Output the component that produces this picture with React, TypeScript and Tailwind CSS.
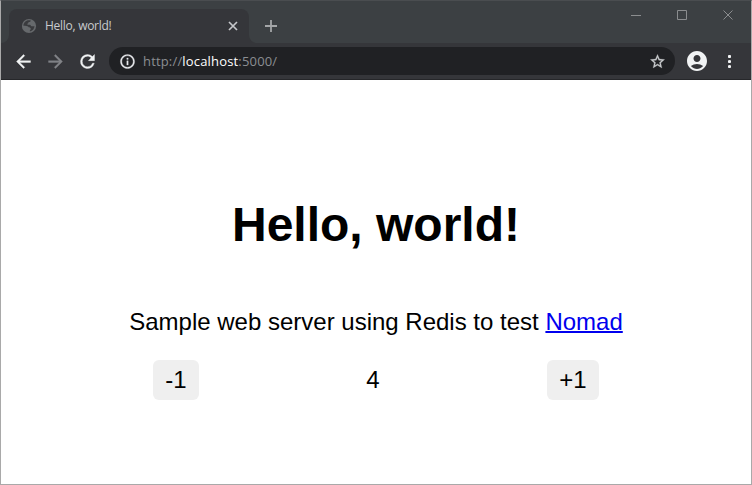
import React from "react";
import { MdAccountCircle } from "react-icons/md";

function GlobeIcon() {
  return (
    <svg className="shrink-0" width="16" height="16" viewBox="0 0 16 16">
      <circle cx="8" cy="8" r="7.1" fill="#66696c" />
      <path
        d="M9.8 2.4c-.2 1.3-.9 1.5-2 1.7-.5.2-.3 1.3-1 1.5-.6.2-.7.7-.2 1.2h2.3c.9 0 .8 1.4 1.700 1.500h2.900c-.2 2.600-2 4.800-4.600 5.200v-1.600c1.100-.3 1.100-1.500.5-2-.8-.6-1.500-.4-2.100-1.200C6.600 7.800 4.500 7.700 2.400 7.700c.1-3.300 2.900-6.500 7.400-5.300z"
        fill="#35363a"
        opacity=".9"
      />
    </svg>
  );
}

type IconProps = { d: string; size: number; className: string };

function Icon({ d, size, className }: IconProps) {
  return (
    <svg
      className={className}
      width={size}
      height={size}
      viewBox="0 0 24 24"
      fill="currentColor"
      stroke="currentColor"
      strokeWidth="0.4"
    >
      <path d={d} />
    </svg>
  );
}

const BACK = "M20 11H7.83l5.59-5.59L12 4l-8 8 8 8 1.410-1.410L7.830 13H20v-2z";
const FORWARD = "M12 4l-1.410 1.410L16.170 11H4v2h12.170l-5.580 5.590L12 20l8-8z";
const RELOAD =
  "M17.650 6.350A7.958 7.958 0 0 0 12 4a8 8 0 1 0 7.730 10h-2.080A5.990 5.990 0 0 1 12 18a6 6 0 1 1 0-12c1.660 0 3.140.690 4.220 1.780L13 11h7V4l-2.350 2.350z";
const INFO =
  "M11 7h2v2h-2zm0 4h2v6h-2zm1-9C6.480 2 2 6.480 2 12s4.480 10 10 10 10-4.480 10-10S17.520 2 12 2zm0 18c-4.410 0-8-3.590-8-8s3.590-8 8-8 8 3.590 8 8-3.590 8-8 8z";
const STAR =
  "M22 9.240l-7.190-.620L12 2 9.190 8.630 2 9.240l5.460 4.730L5.820 21 12 17.270 18.180 21l-1.630-7.030L22 9.240zM12 15.400l-3.760 2.270 1-4.280-3.320-2.880 4.380-.380L12 6.100l1.710 4.040 4.380.380-3.320 2.880 1 4.280L12 15.400z";

function WindowControls() {
  return (
    <div className="ml-auto mr-[17px] mt-[9px] flex h-[11px] gap-[35px] text-[#8b8d8f]">
      <svg width="11" height="11" viewBox="0 0 11 11" fill="none" stroke="currentColor">
        <path d="M0 5.5H10" />
      </svg>
      <svg width="11" height="11" viewBox="0 0 11 11" fill="none" stroke="currentColor">
        <path d="M.5.5h9v9h-9z" />
      </svg>
      <svg width="11" height="11" viewBox="0 0 11 11" fill="none" stroke="currentColor">
        <path d="M.5.5l9 9M9.500.500l-9 9" />
      </svg>
    </div>
  );
}

function TabStrip() {
  return (
    <div className="flex h-[42px] items-start bg-[#3c4043]">
      <svg className="mt-[34px] shrink-0" width="8" height="8" viewBox="0 0 8 8">
        <path d="M8 0v8H0a8 8 0 0 0 8-8z" fill="#35363a" />
      </svg>
      <div className="mt-2 flex h-[34px] w-[240px] items-center rounded-t-lg bg-[#35363a] pl-3 pr-[11px]">
        <GlobeIcon />
        <span className="ml-2 whitespace-nowrap font-['Open_Sans','Noto_Sans',sans-serif] text-[12px] leading-4 tracking-[-0.28px] text-[#c9cbce]">
          Hello, world!
        </span>
        <svg className="ml-auto" width="10" height="10" viewBox="0 0 10 10" fill="none" stroke="#c5c7ca" strokeWidth="1.7">
          <path d="M1 1l8 8M9 1l-8 8" />
        </svg>
      </div>
      <svg className="mt-[34px] shrink-0" width="8" height="8" viewBox="0 0 8 8">
        <path d="M0 0v8h8a8 8 0 0 1-8-8z" fill="#35363a" />
      </svg>
      <svg className="ml-2 mt-[19px]" width="12" height="12" viewBox="0 0 12 12" fill="none" stroke="#a4a6a8" strokeWidth="1.8">
        <path d="M6 0v12M0 6h12" />
      </svg>
      <WindowControls />
    </div>
  );
}

function Toolbar() {
  return (
    <div className="flex h-[37px] items-center border-b border-[#26272a] bg-[#35363a] px-[11px]">
      <Icon d={BACK} size={21} className="ml-px shrink-0 text-[#f1f3f4]" />
      <Icon d={FORWARD} size={21} className="ml-[11px] shrink-0 text-[#818387]" />
      <Icon d={RELOAD} size={21} className="ml-[11px] shrink-0 text-[#f1f3f4]" />
      <div className="ml-[11px] flex h-7 w-[566px] items-center rounded-full bg-[#202124] pl-2.5 pr-[9px]">
        <Icon d={INFO} size={17} className="shrink-0 text-[#e8eaed]" />
        <span className="ml-[7px] whitespace-nowrap font-['Open_Sans','Noto_Sans',sans-serif] text-[13px] leading-4 tracking-[0.17px] text-[#8b8e92]">
          http://<span className="text-white">localhost</span>:5000/
        </span>
        <Icon d={STAR} size={17} className="ml-auto shrink-0 text-[#c9cbce]" />
      </div>
      <MdAccountCircle className="ml-2.5 shrink-0 text-[#f1f3f4]" size={24} />
      <svg className="ml-auto mr-[9px] text-[#f1f3f4]" width="3" height="13" viewBox="0 0 3 13" fill="currentColor">
        <circle cx="1.5" cy="1.5" r="1.6" />
        <circle cx="1.5" cy="6.5" r="1.6" />
        <circle cx="1.5" cy="11.5" r="1.6" />
      </svg>
    </div>
  );
}

export default function App() {
  return (
    <div className="flex h-[485px] w-[752px] flex-col overflow-hidden border border-[#a9a9a9] border-t-[#4a4d50] bg-white font-['Liberation_Sans',Arial,sans-serif] text-black">
      <TabStrip />
      <Toolbar />
      <main className="flex flex-col items-center text-[24px] leading-7">
        <h1 className="mt-[117px] text-[48px] font-bold leading-[56px]">Hello, world!</h1>
        <p className="mt-[55px] whitespace-nowrap">
          Sample web server using Redis to test{" "}
          <a href="#" className="text-[#0000ee] underline decoration-2">Nomad</a>
        </p>
        <div className="mt-6 flex h-10 w-[446px] items-center justify-between">
          <button className="h-10 w-[46px] rounded-md bg-[#efefef]">-1</button>
          <span>4</span>
          <button className="h-10 w-[52px] rounded-md bg-[#efefef]">+1</button>
        </div>
      </main>
    </div>
  );
}
